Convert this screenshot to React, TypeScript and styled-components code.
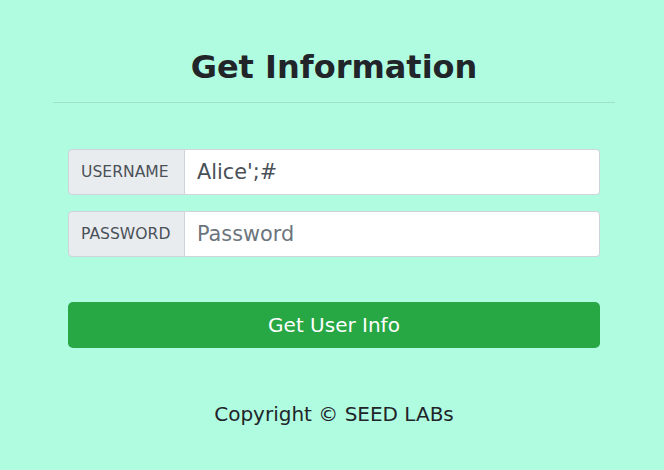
import React from "react";
import styled, { createGlobalStyle } from "styled-components";

const Global = createGlobalStyle`
  html, body { margin: 0; padding: 0; }
  body {
    background: #b0fce1;
    font-family: "DejaVu Sans", sans-serif;
    color: #212529;
  }
`;

const Page = styled.div`
  display: flex;
  flex-direction: column;
  align-items: center;
  padding-top: 48px;
`;

const Header = styled.div`
  width: 562px;
  margin-left: 4px;
  display: flex;
  flex-direction: column;
  align-items: center;
`;

const Title = styled.h2`
  margin: 0;
  font-size: 32px;
  line-height: 38px;
  font-weight: 700;
  color: #212529;
`;

const Rule = styled.hr`
  width: 100%;
  margin: 16px 0 0;
  border: 0;
  border-top: 1px solid rgba(0, 0, 0, 0.1);
`;

const Form = styled.form`
  width: 532px;
  margin: 46px 0 0 4px;
  display: flex;
  flex-direction: column;
  gap: 16px;
`;

const Group = styled.div`
  display: flex;
  height: 46px;
`;

const Addon = styled.span`
  width: 117px;
  box-sizing: border-box;
  display: flex;
  align-items: center;
  padding: 0 12px;
  background: #e9ecef;
  border: 1px solid #ced4da;
  border-radius: 4px 0 0 4px;
  font-size: 15.6px;
  color: #495057;
`;

const Field = styled.input`
  flex: 1;
  min-width: 0;
  box-sizing: border-box;
  border: 1px solid #ced4da;
  border-left: 0;
  border-radius: 0 4px 4px 0;
  padding: 0 12px;
  background: #fff;
  font-family: "DejaVu Sans", sans-serif;
  font-size: 20.8px;
  color: #495057;
  outline: none;
  &::placeholder {
    color: #6c757d;
  }
`;

const Button = styled.button`
  margin-top: 29px;
  height: 46px;
  border: 0;
  border-radius: 5px;
  background: #28a745;
  color: #fff;
  font-family: "DejaVu Sans", sans-serif;
  font-size: 20px;
  cursor: pointer;
`;

const Footer = styled.p`
  margin: 51px 0 0 4px;
  font-size: 20px;
  line-height: 30px;
  color: #212529;
`;

export default function App() {
  return (
    <>
      <Global />
      <Page>
        <Header>
          <Title>Get Information</Title>
          <Rule />
        </Header>
        <Form onSubmit={(e) => e.preventDefault()}>
          <Group>
            <Addon>USERNAME</Addon>
            <Field defaultValue="Alice';#" />
          </Group>
          <Group>
            <Addon>PASSWORD</Addon>
            <Field type="password" placeholder="Password" />
          </Group>
          <Button type="submit">Get User Info</Button>
        </Form>
        <Footer>Copyright © SEED LABs</Footer>
      </Page>
    </>
  );
}
